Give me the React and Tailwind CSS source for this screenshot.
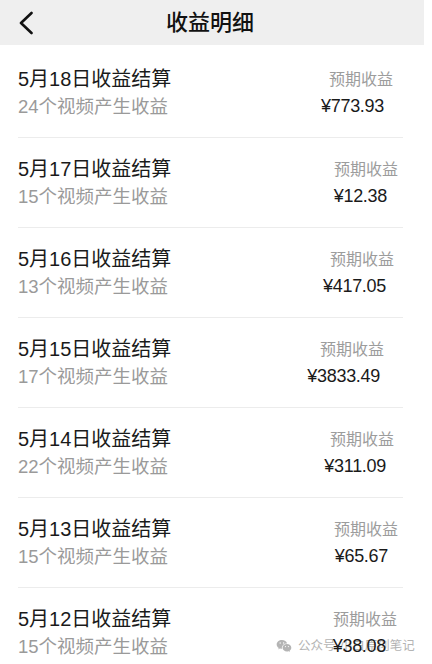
import { RiWechatFill } from "react-icons/ri"

const rows = [
  { date: "5月18日收益结算", count: "24个视频产生收益", amount: "¥773.93", labelMr: "mr-[10px]", amountMr: "mr-[19px]" },
  { date: "5月17日收益结算", count: "15个视频产生收益", amount: "¥12.38", labelMr: "mr-[5px]", amountMr: "mr-[16px]" },
  { date: "5月16日收益结算", count: "13个视频产生收益", amount: "¥417.05", labelMr: "mr-[9px]", amountMr: "mr-[17px]" },
  { date: "5月15日收益结算", count: "17个视频产生收益", amount: "¥3833.49", labelMr: "mr-[19px]", amountMr: "mr-[23px]" },
  { date: "5月14日收益结算", count: "22个视频产生收益", amount: "¥311.09", labelMr: "mr-[9px]", amountMr: "mr-[17px]" },
  { date: "5月13日收益结算", count: "15个视频产生收益", amount: "¥65.67", labelMr: "mr-[5px]", amountMr: "mr-[15px]" },
  { date: "5月12日收益结算", count: "15个视频产生收益", amount: "¥38.08", labelMr: "mr-[6px]", amountMr: "mr-[17px]" },
]

export default function App() {
  return (
    <div className="relative h-[664px] w-[432px] overflow-hidden bg-white font-['Liberation_Sans','Noto_Sans_CJK_SC',sans-serif]">
      <div className="w-[424px]">
        {/* Header */}
        <header className="flex h-[45px] items-center bg-[#efefef]">
          <div className="w-[70px] pl-[19px]">
            <svg width="14" height="24" viewBox="0 0 14 24" fill="none" stroke="#111" strokeWidth="2.6" strokeLinecap="round" strokeLinejoin="round">
              <path d="M12.5 2 L2 12 L12.5 22" />
            </svg>
          </div>
          <h1 className="flex-1 text-center text-[22px] font-medium leading-[45px] text-[#111]">收益明细</h1>
          <div className="w-[74px]" />
        </header>

        {/* List */}
        <div className="pt-[3px]">
          {rows.map((row, i) => (
            <div key={i} className="ml-[18px] mr-[21px] flex h-[90px] justify-between border-b border-[#ececec] pt-[17px]">
              <div>
                <p className="text-[20px] leading-[28px] text-[#1a1a1a]">{row.date}</p>
                <p className="text-[18.5px] leading-[28px] text-[#9a9a9a]">{row.count}</p>
              </div>
              <div className="flex flex-col items-end">
                <p className={`text-[16px] leading-[29px] text-[#9c9c9c] ${row.labelMr}`}>预期收益</p>
                <p className={`relative z-10 text-[18px] leading-[24px] tracking-[-0.3px] text-[#1a1a1a] ${row.amountMr}`}>{row.amount}</p>
              </div>
            </div>
          ))}
        </div>
      </div>

      {/* Watermark */}
      <div className="absolute left-[276px] top-[637px] flex items-center gap-[6px] text-[12.5px] leading-[18px] text-[#b4b4b4]">
        <RiWechatFill className="h-[16px] w-[16px]" />
        <span>公众号·小白原创笔记</span>
      </div>
    </div>
  )
}
